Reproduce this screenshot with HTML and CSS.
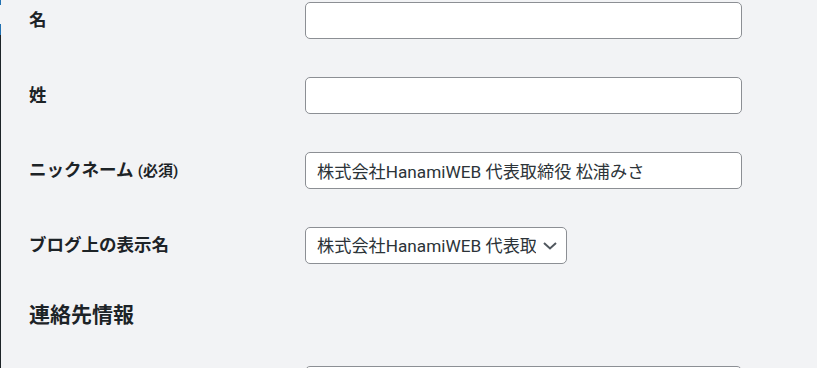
FILE: index.html
```html
<!DOCTYPE html>
<html lang="ja">
<head>
    <meta charset="UTF-8">
    <meta name="viewport" content="width=device-width, initial-scale=1.0">
    <title>プロフィール</title>
    <link rel="stylesheet" href="styles.css">
</head>
<body>
    <div id="adminmenu-edge">
        <span class="edge-blue short"></span>
        <span class="edge-light"></span>
        <span class="edge-blue"></span>
        <span class="edge-dark"></span>
    </div>

    <div id="content">
        <div class="form-table first">
            <div class="form-row">
                <label class="row-label" for="first_name">名</label>
                <input type="text" id="first_name" class="regular-text">
            </div>
            <div class="form-row">
                <label class="row-label" for="last_name">姓</label>
                <input type="text" id="last_name" class="regular-text">
            </div>
            <div class="form-row">
                <label class="row-label" for="nickname">ニックネーム <span class="description">(必須)</span></label>
                <input type="text" id="nickname" class="regular-text" value="株式会社HanamiWEB 代表取締役 松浦みさ">
            </div>
            <div class="form-row">
                <label class="row-label" for="display_name">ブログ上の表示名</label>
                <div class="select-wrap">
                    <select id="display_name">
                        <option>株式会社HanamiWEB 代表取締役 松浦みさ</option>
                    </select>
                    <svg class="chevron" width="14" height="8" viewBox="0 0 14 8">
                        <path d="M1 1 L7 6.5 L13 1" fill="none" stroke="#50575e" stroke-width="2"/>
                    </svg>
                </div>
            </div>
        </div>

        <h2>連絡先情報</h2>

        <div class="form-table">
            <div class="form-row">
                <label class="row-label" for="email"></label>
                <input type="text" id="email" class="regular-text">
            </div>
        </div>
    </div>
</body>
</html>
```

FILE: styles.css
```css
body {
    margin: 0;
    background-color: #f2f3f5;
    color: #1d2327;
    font-family: Roboto, "Noto Sans CJK JP", sans-serif;
    display: flex;
    height: 368px;
    overflow: hidden;
}

#adminmenu-edge {
    width: 1px;
    display: flex;
    flex-direction: column;
}

.edge-blue {
    height: 11px;
    background-color: #2271b1;
}

.edge-blue.short {
    height: 5px;
}

.edge-light {
    height: 19px;
    background-color: #f2f3f5;
}

.edge-dark {
    flex: 1;
    background-color: #1d2327;
}

#content {
    flex: 1;
    padding-left: 28px;
}

.form-table.first {
    margin-top: -17px; /* page is scrolled a little */
}

.form-row {
    display: flex;
    align-items: center;
    padding: 19px 0;
}

.row-label {
    width: 276px;
    font-size: 17.5px;
    font-weight: 600;
    line-height: 1.3;
}

.description {
    font-size: 15px;
}

input,
select {
    font-family: Roboto, "Noto Sans CJK JP", sans-serif;
    font-size: 17.2px;
    color: #2c3338;
    background-color: #fff;
    border: 1px solid #8c8f94;
    border-radius: 5px;
    box-sizing: border-box;
    height: 37px;
    margin: 0;
}

.regular-text {
    width: 437px;
    padding: 0 11px;
}

.select-wrap {
    position: relative;
    width: 262px;
}

select {
    -webkit-appearance: none;
    appearance: none;
    width: 100%;
    padding: 0 30px 0 11px;
}

.chevron {
    position: absolute;
    right: 10px;
    top: 15px;
}

h2 {
    font-size: 21px;
    font-weight: 600;
    line-height: 1.4;
    margin: 18px 0 17px;
}
```
